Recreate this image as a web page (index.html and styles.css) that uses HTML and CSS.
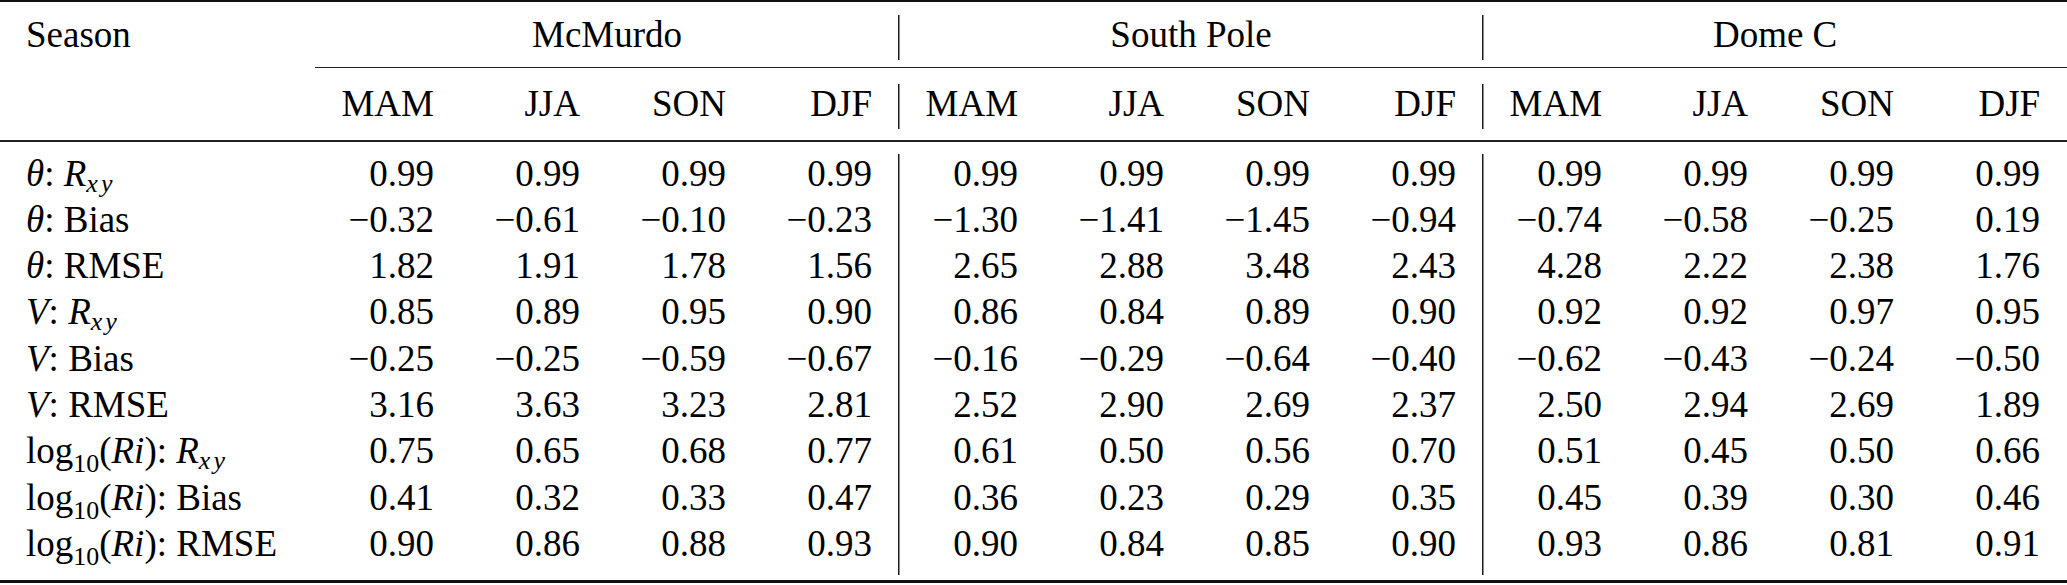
FILE: index.html
```html
<!DOCTYPE html>
<html lang="en">
<head>
<meta charset="utf-8">
<title>Seasonal statistics</title>
<link rel="stylesheet" href="styles.css">
</head>
<body>
<table class="results">
  <colgroup>
    <col class="c-label">
    <col class="c-first">
    <col class="c-num"><col class="c-num"><col class="c-num">
    <col class="c-num"><col class="c-num"><col class="c-num"><col class="c-num">
    <col class="c-num"><col class="c-num"><col class="c-num">
    <col class="c-last">
  </colgroup>
  <thead>
    <tr class="head-top">
      <th class="label">Season</th>
      <th class="group g1" colspan="4">McMurdo</th>
      <th class="group g2 vl" colspan="4">South Pole</th>
      <th class="group g3 vl" colspan="4">Dome C</th>
    </tr>
    <tr class="head-sub">
      <th class="label"></th>
      <th>MAM</th><th>JJA</th><th>SON</th><th>DJF</th>
      <th class="vl">MAM</th><th>JJA</th><th>SON</th><th>DJF</th>
      <th class="vl">MAM</th><th>JJA</th><th>SON</th><th class="end">DJF</th>
    </tr>
  </thead>
  <tbody>
    <tr class="first">
      <td class="label"><i>θ</i>: <i>R</i><sub class="xy"><i>xy</i></sub></td>
      <td>0.99</td><td>0.99</td><td>0.99</td><td>0.99</td>
      <td class="vl">0.99</td><td>0.99</td><td>0.99</td><td>0.99</td>
      <td class="vl">0.99</td><td>0.99</td><td>0.99</td><td class="end">0.99</td>
    </tr>
    <tr>
      <td class="label"><i>θ</i>: Bias</td>
      <td>−0.32</td><td>−0.61</td><td>−0.10</td><td>−0.23</td>
      <td class="vl">−1.30</td><td>−1.41</td><td>−1.45</td><td>−0.94</td>
      <td class="vl">−0.74</td><td>−0.58</td><td>−0.25</td><td class="end">0.19</td>
    </tr>
    <tr>
      <td class="label"><i>θ</i>: RMSE</td>
      <td>1.82</td><td>1.91</td><td>1.78</td><td>1.56</td>
      <td class="vl">2.65</td><td>2.88</td><td>3.48</td><td>2.43</td>
      <td class="vl">4.28</td><td>2.22</td><td>2.38</td><td class="end">1.76</td>
    </tr>
    <tr>
      <td class="label"><i>V</i>: <i>R</i><sub class="xy"><i>xy</i></sub></td>
      <td>0.85</td><td>0.89</td><td>0.95</td><td>0.90</td>
      <td class="vl">0.86</td><td>0.84</td><td>0.89</td><td>0.90</td>
      <td class="vl">0.92</td><td>0.92</td><td>0.97</td><td class="end">0.95</td>
    </tr>
    <tr>
      <td class="label"><i>V</i>: Bias</td>
      <td>−0.25</td><td>−0.25</td><td>−0.59</td><td>−0.67</td>
      <td class="vl">−0.16</td><td>−0.29</td><td>−0.64</td><td>−0.40</td>
      <td class="vl">−0.62</td><td>−0.43</td><td>−0.24</td><td class="end">−0.50</td>
    </tr>
    <tr>
      <td class="label"><i>V</i>: RMSE</td>
      <td>3.16</td><td>3.63</td><td>3.23</td><td>2.81</td>
      <td class="vl">2.52</td><td>2.90</td><td>2.69</td><td>2.37</td>
      <td class="vl">2.50</td><td>2.94</td><td>2.69</td><td class="end">1.89</td>
    </tr>
    <tr>
      <td class="label">log<sub class="ten">10</sub>(<i>Ri</i>): <i>R</i><sub class="xy"><i>xy</i></sub></td>
      <td>0.75</td><td>0.65</td><td>0.68</td><td>0.77</td>
      <td class="vl">0.61</td><td>0.50</td><td>0.56</td><td>0.70</td>
      <td class="vl">0.51</td><td>0.45</td><td>0.50</td><td class="end">0.66</td>
    </tr>
    <tr>
      <td class="label">log<sub class="ten">10</sub>(<i>Ri</i>): Bias</td>
      <td>0.41</td><td>0.32</td><td>0.33</td><td>0.47</td>
      <td class="vl">0.36</td><td>0.23</td><td>0.29</td><td>0.35</td>
      <td class="vl">0.45</td><td>0.39</td><td>0.30</td><td class="end">0.46</td>
    </tr>
    <tr class="last">
      <td class="label">log<sub class="ten">10</sub>(<i>Ri</i>): RMSE</td>
      <td>0.90</td><td>0.86</td><td>0.88</td><td>0.93</td>
      <td class="vl">0.90</td><td>0.84</td><td>0.85</td><td>0.90</td>
      <td class="vl">0.93</td><td>0.86</td><td>0.81</td><td class="end">0.91</td>
    </tr>
  </tbody>
</table>
</body>
</html>
```

FILE: styles.css
```css
html,
body {
  margin: 0;
  padding: 0;
  background: #ffffff;
}

body {
  font-family: "Liberation Serif", "Times New Roman", serif;
  font-size: 37px;
  color: #000000;
}

.results {
  width: 2067px;
  table-layout: fixed;
  border-collapse: separate;
  border-spacing: 0;
}

.c-label { width: 315px; }
.c-first { width: 119px; }
.c-num { width: 146px; }
.c-last { width: 173px; }

.results th,
.results td {
  padding: 0;
  font-weight: normal;
  vertical-align: top;
  text-align: right;
  line-height: 46.3px;
  white-space: nowrap;
}

.results .label {
  text-align: left;
  padding-left: 26px;
}

.results .end {
  padding-right: 27px;
}

/* header: group row */
.head-top th {
  border-top: 2px solid #111;
  line-height: 45px;
  padding-top: 10px;
  padding-bottom: 10px;
}

.head-top .group {
  text-align: center;
  border-bottom: 1px solid #222;
  padding-left: 54px;
}

.head-top .g1 { padding-left: 27px; }
.head-top .g3 { padding-right: 27px; }

/* header: season row */
.head-sub th {
  line-height: 45px;
  padding-top: 13px;
  padding-bottom: 14px;
  border-bottom: 2px solid #222;
}

/* body */
.first td { padding-top: 8.5px; }

.last td {
  padding-bottom: 13px;
  border-bottom: 3px solid #111;
}

/* vertical separators between station groups */
.vl {
  background-image: linear-gradient(#1a1a1a, #1a1a1a);
  background-repeat: no-repeat;
  background-position: 26px 0;
  background-size: 1.5px 100%;
}

.head-top .vl {
  background-position: 26px 13px;
  background-size: 1.5px 45px;
}

.head-sub .vl {
  background-position: 26px 16px;
  background-size: 1.5px 45px;
}

.first .vl {
  background-position: 26px 12px;
  background-size: 1.5px calc(100% - 12px);
}

.last .vl {
  background-position: 26px 0;
  background-size: 1.5px calc(100% - 5px);
}

/* math-like labels */
sub {
  line-height: 0;
  font-size: 0.7em;
}

sub.xy {
  vertical-align: -0.24em;
  letter-spacing: 0.12em;
}

sub.ten {
  vertical-align: -0.36em;
}
```
